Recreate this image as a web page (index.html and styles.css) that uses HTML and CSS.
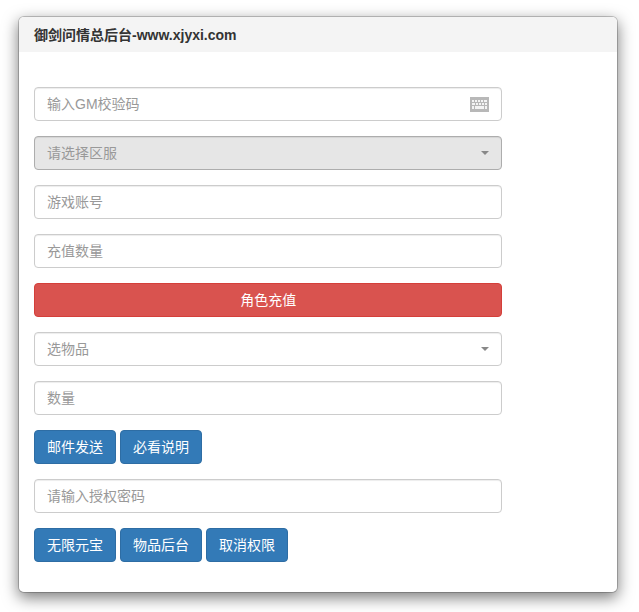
FILE: index.html
```html
<!DOCTYPE html>
<html lang="zh-CN">
<head>
  <meta charset="UTF-8">
  <meta name="viewport" content="width=device-width, initial-scale=1.0">
  <title>御剑问情总后台</title>
  <link rel="stylesheet" href="styles.css">
</head>
<body>
  <main class="panel">
    <h1 class="panel-heading">御剑问情总后台-www.xjyxi.com</h1>

    <form class="panel-body">
      <div class="field">
        <input class="form-control" type="text" aria-label="输入GM校验码" placeholder="输入GM校验码">
        <button class="keyboard" type="button" aria-label="键盘">
          <svg width="19" height="15" viewBox="0 0 19 15">
            <path fill="#b8b8b8" d="M0 0h19v15H0z"/>
            <path fill="#f4f4f4" d="M2 3h2v2H2zM5 3h2v2H5zM8 3h2v2H8zM11 3h2v2h-2zM14 3h3v2h-3zM2 6h3v2H2zM6 6h2v2H6zM9 6h2v2H9zM12 6h2v2h-2zM15 6h2v2h-2zM2 9h2v3H2zM5 9h9v3H5zM15 9h2v3h-2z"/>
          </svg>
        </button>
      </div>

      <div class="field caret">
        <select class="form-control active" aria-label="请选择区服">
          <option>请选择区服</option>
        </select>
      </div>

      <input class="form-control" type="text" aria-label="游戏账号" placeholder="游戏账号">
      <input class="form-control" type="text" aria-label="充值数量" placeholder="充值数量">
      <button class="btn btn-danger" type="button">角色充值</button>

      <div class="field caret">
        <select class="form-control" aria-label="选物品">
          <option>选物品</option>
        </select>
      </div>

      <input class="form-control" type="text" aria-label="数量" placeholder="数量">

      <div class="btn-row">
        <button class="btn btn-primary" type="button">邮件发送</button>
        <button class="btn btn-primary" type="button">必看说明</button>
      </div>

      <input class="form-control" type="password" aria-label="请输入授权密码" placeholder="请输入授权密码">

      <div class="btn-row">
        <button class="btn btn-primary" type="button">无限元宝</button>
        <button class="btn btn-primary" type="button">物品后台</button>
        <button class="btn btn-primary" type="button">取消权限</button>
      </div>
    </form>
  </main>
</body>
</html>
```

FILE: styles.css
```css
* {
  box-sizing: border-box;
}
body {
  margin: 0;
  padding: 16px 21px 19px 18px;
  font-family: "Liberation Sans", "Noto Sans CJK SC", sans-serif;
  font-size: 14px;
  line-height: 20px;
  color: #333;
  background: #fff;
}
.panel {
  max-width: 600px;
  margin: 0 auto;
  background: #fff;
  background-clip: padding-box;
  border: 1px solid rgba(0, 0, 0, 0.2);
  border-radius: 6px;
  box-shadow: 0 5px 15px rgba(0, 0, 0, 0.5);
}
.panel-heading {
  margin: 0;
  padding: 8px 15px 7px;
  font-size: 14px;
  line-height: 20px;
  font-weight: bold;
  background: #f4f4f4;
  border-radius: 5px 5px 0 0;
}
.panel-body {
  display: flex;
  flex-direction: column;
  gap: 15px;
  width: 83.333%;
  padding: 35px 15px 30px;
}
.field {
  position: relative;
}
.form-control {
  display: block;
  width: 100%;
  height: 34px;
  padding: 6px 12px;
  font: inherit;
  color: #999;
  background: #fff;
  border: 1px solid #ccc;
  border-radius: 4px;
  box-shadow: inset 0 1px 1px rgba(0, 0, 0, 0.075);
  appearance: none;
}
.form-control::placeholder {
  color: #999;
  opacity: 1;
}
.form-control.active {
  background: #e6e6e6;
  border-color: #adadad;
}
.caret::after {
  content: "";
  position: absolute;
  top: 15px;
  right: 13px;
  border-top: 4px solid #888;
  border-left: 4px solid transparent;
  border-right: 4px solid transparent;
  pointer-events: none;
}
.keyboard {
  position: absolute;
  top: 10px;
  right: 13px;
  padding: 0;
  background: none;
  border: 0;
  cursor: pointer;
}
.keyboard svg {
  display: block;
}
.btn-row {
  display: flex;
  gap: 4px;
}
.btn {
  height: 34px;
  padding: 6px 12px;
  font: inherit;
  color: #fff;
  border: 1px solid;
  border-radius: 4px;
  cursor: pointer;
}
.btn-primary {
  background: #337ab7;
  border-color: #2e6da4;
}
.btn-danger {
  background: #d9534f;
  border-color: #d43f3a;
}
```
